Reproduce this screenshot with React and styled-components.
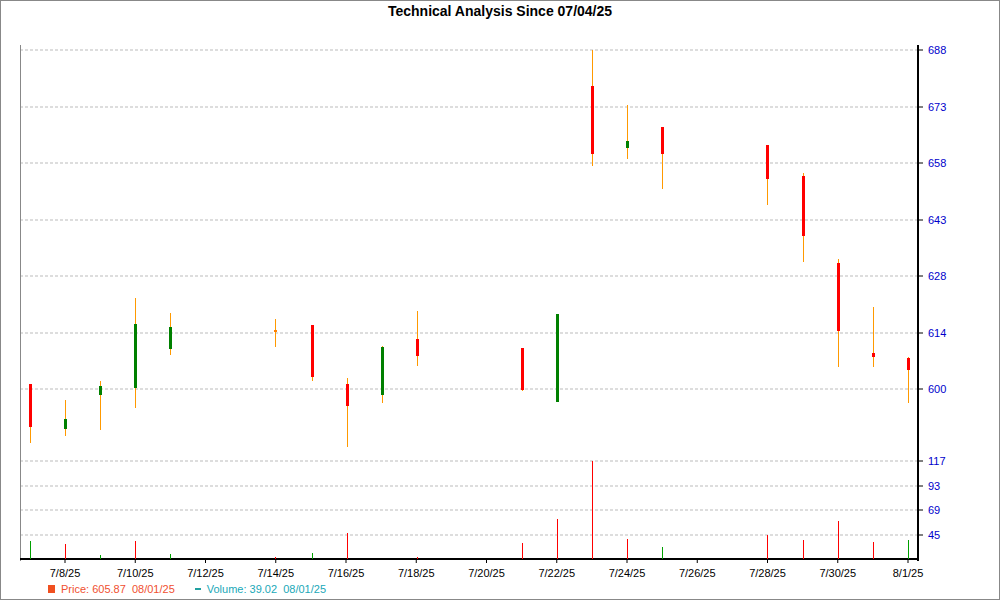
import React from 'react';
import styled, { createGlobalStyle } from 'styled-components';

const Global = createGlobalStyle`
  body { margin: 0; background: #fff; font-family: "Liberation Sans", Arial, sans-serif; }
`;

const Frame = styled.div`
  width: 1000px;
  height: 600px;
  box-sizing: border-box;
  border: 1px solid #888;
  display: flex;
  flex-direction: column;
  overflow: hidden;
`;

const Title = styled.div`
  height: 21px;
  line-height: 20px;
  text-align: center;
  font-weight: bold;
  font-size: 14px;
  color: #000;
`;

const Legend = styled.div`
  display: flex;
  align-items: center;
  gap: 6px;
  padding-left: 47px;
  font-size: 11px;
  height: 20px;
`;

const Swatch = styled.span`
  width: 7px;
  height: 8px;
  background: ${p => p.color};
  display: inline-block;
`;

const Dash = styled.span`
  width: 6px;
  height: 2px;
  margin-left: 14px;
  background: ${p => p.color};
  display: inline-block;
`;

const LegendText = styled.span`
  color: ${p => p.color};
  white-space: pre;
`;

const candles = [
  [30, 383, 442, 383, 426, 'r'], [65, 399, 435, 418, 428, 'g'], [100, 380, 429, 385, 394, 'g'],
  [135, 297, 407, 323, 387, 'g'], [170, 312, 354, 326, 348, 'g'], [275, 318, 346, 329, 331, 'o'],
  [312, 324, 380, 324, 376, 'r'], [347, 377, 446, 383, 405, 'r'], [382, 345, 402, 346, 394, 'g'],
  [417, 310, 365, 338, 355, 'r'], [522, 347, 390, 347, 389, 'r'], [557, 313, 401, 313, 401, 'g'],
  [592, 49, 165, 85, 153, 'r'], [627, 104, 158, 140, 147, 'g'], [662, 126, 188, 126, 153, 'r'],
  [767, 144, 204, 144, 178, 'r'], [803, 172, 261, 175, 235, 'r'], [838, 258, 366, 262, 330, 'r'],
  [873, 306, 366, 352, 356, 'r'], [908, 356, 402, 357, 369, 'r'],
];

const vols = [
  [30, 540, 'g'], [65, 543, 'r'], [100, 554, 'g'], [135, 540, 'r'], [170, 553, 'g'], [275, 556, 'r'],
  [312, 552, 'g'], [347, 532, 'r'], [417, 556, 'r'], [522, 542, 'r'], [557, 518, 'r'], [592, 460, 'r'],
  [627, 538, 'r'], [662, 546, 'g'], [767, 534, 'r'], [803, 539, 'r'], [838, 520, 'r'], [873, 541, 'r'],
  [908, 539, 'g'],
];

const bodyColor = { r: '#ff0000', g: '#008000', o: '#ff8000' };
const volColor = { r: '#ff0000', g: '#00a000' };

const priceTicks = [[49, '688'], [106, '673'], [162, '658'], [219, '643'], [275, '628'], [332, '614'], [388, '600']];
const volTicks = [[460, '117'], [485, '93'], [509, '69'], [534, '45']];
const dates = ['7/8/25', '7/10/25', '7/12/25', '7/14/25', '7/16/25', '7/18/25', '7/20/25', '7/22/25', '7/24/25', '7/26/25', '7/28/25', '7/30/25', '8/1/25'];

function Chart() {
  return (
    <svg width="998" height="557" viewBox="1 21 998 557" style={{ display: 'block' }}>
      {priceTicks.map(([y]) => (
        <line key={y} x1="20" x2="918" y1={y} y2={y} stroke="#bbb" strokeDasharray="3 2" />
      ))}
      {volTicks.map(([y]) => (
        <line key={y} x1="20" x2="918" y1={y} y2={y} stroke="#bbb" strokeDasharray="3 2" />
      ))}
      <line x1="20.5" x2="20.5" y1="44" y2="560" stroke="#888" />
      <line x1="918" x2="918" y1="44" y2="560" stroke="#000" strokeWidth="2" />
      <line x1="20" x2="919" y1="558" y2="558" stroke="#000" strokeWidth="2" />
      {[...priceTicks, ...volTicks].map(([y, t]) => (
        <g key={t}>
          <line x1="918" x2="923" y1={y} y2={y} stroke="#000" />
          <text x="928" y={y + 4} fontSize="11" fill="#0000cc">{t}</text>
        </g>
      ))}
      {candles.map(([x, wh, wl, bt, bb, c]) => (
        <g key={x}>
          <line x1={x + 0.5} x2={x + 0.5} y1={wh} y2={wl} stroke="#ff9900" />
          <rect x={x - 1} y={bt} width="3" height={Math.max(bb - bt, 2)} fill={bodyColor[c]} />
        </g>
      ))}
      {vols.map(([x, y, c]) => (
        <line key={x} x1={x + 0.5} x2={x + 0.5} y1={y} y2="558" stroke={volColor[c]} />
      ))}
      {dates.map((d, i) => {
        const x = 65 + i * 70.25;
        return (
          <g key={d}>
            <line x1={x} x2={x} y1="558" y2="562" stroke="#000" />
            <text x={x} y="576" fontSize="11" textAnchor="middle" fill="#000">{d}</text>
          </g>
        );
      })}
    </svg>
  );
}

export default function App() {
  return (
    <>
      <Global />
      <Frame>
        <Title>Technical Analysis Since 07/04/25</Title>
        <Chart />
        <Legend>
          <Swatch color="#f05020" />
          <LegendText color="#f05030">{'Price: 605.87  08/01/25'}</LegendText>
          <Dash color="#20a0a0" />
          <LegendText color="#20a8b8">{'Volume: 39.02  08/01/25'}</LegendText>
        </Legend>
      </Frame>
    </>
  );
}
